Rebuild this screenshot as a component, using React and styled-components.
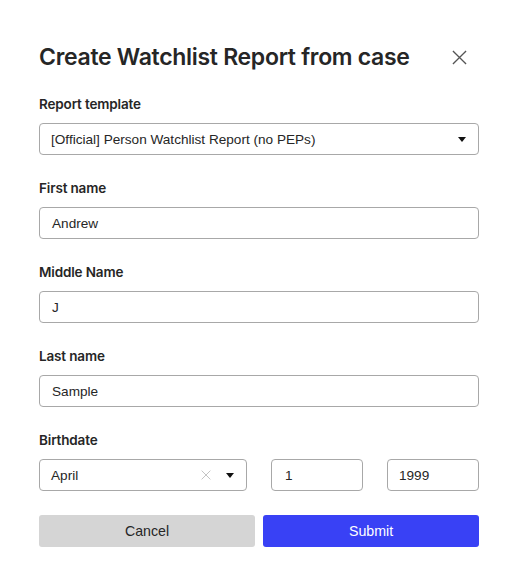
import React from "react";
import styled, { createGlobalStyle } from "styled-components";

const Global = createGlobalStyle`
  body {
    margin: 0;
    background: #ffffff;
    font-family: Inter, "Noto Sans", "Liberation Sans", sans-serif;
    color: #262626;
  }
`;

const Dialog = styled.div`
  width: 516px;
  height: 585px;
  box-sizing: border-box;
  padding: 41px 37px 0 39px;
  background: #fff;
`;

const Header = styled.div`
  display: flex;
  align-items: center;
  justify-content: space-between;
  height: 32px;
  margin-bottom: 21px;

  h2 {
    margin: 0;
    font-size: 23px;
    font-weight: 600;
    letter-spacing: -0.3px;
    color: #262626;
  }
`;

const CloseButton = styled.button`
  display: flex;
  align-items: center;
  justify-content: center;
  width: 24px;
  height: 24px;
  margin-right: 8px;
  padding: 0;
  border: none;
  background: none;
  cursor: pointer;
`;

const Form = styled.div`
  display: flex;
  flex-direction: column;
  gap: 23px;
`;

const Field = styled.div`
  display: flex;
  flex-direction: column;

  label {
    font-size: 13.5px;
    font-weight: 600;
    line-height: 20px;
    letter-spacing: -0.15px;
    margin-bottom: 9px;
    color: #262626;
  }
`;

const Box = styled.div`
  display: flex;
  align-items: center;
  height: 32px;
  box-sizing: border-box;
  width: ${(p) => p.$width || "100%"};
  padding: 0 11px 0 ${(p) => p.$pad || "11px"};
  border: 1px solid #a8a8a8;
  border-radius: 4px;
  font-family: "Liberation Sans", Arial, sans-serif;
  font-size: 13.6px;
  color: #262626;
  background: #fff;

  span.value {
    flex: 1;
  }
`;

const Caret = styled.span`
  width: 0;
  height: 0;
  margin-right: 1px;
  border-left: 4.5px solid transparent;
  border-right: 4.5px solid transparent;
  border-top: 5px solid #111;
`;

const Clear = styled.span`
  display: flex;
  margin-right: 15px;
`;

const DateRow = styled.div`
  display: flex;
  gap: 24px;
`;

const Actions = styled.div`
  display: flex;
  gap: 8px;
  margin-top: 24px;
`;

const Button = styled.button`
  flex: 1;
  height: 32px;
  border: none;
  border-radius: 3px;
  font-family: "Liberation Sans", Arial, sans-serif;
  font-size: 14.2px;
  cursor: pointer;
  background: ${(p) => (p.$primary ? "#3941f5" : "#d5d5d5")};
  color: ${(p) => (p.$primary ? "#fff" : "#262626")};
`;

const XIcon = ({ size, color, stroke }) => (
  <svg width={size} height={size} viewBox="0 0 16 16">
    <path d="M1 1 L15 15 M15 1 L1 15" stroke={color} strokeWidth={stroke} fill="none" />
  </svg>
);

const App = () => (
  <>
    <Global />
    <Dialog>
      <Header>
        <h2>Create Watchlist Report from case</h2>
        <CloseButton>
          <XIcon size={15} color="#555" stroke={1.4} />
        </CloseButton>
      </Header>
      <Form>
        <Field>
          <label>Report template</label>
          <Box>
            <span className="value">[Official] Person Watchlist Report (no PEPs)</span>
            <Caret />
          </Box>
        </Field>
        <Field>
          <label>First name</label>
          <Box $pad="12px">Andrew</Box>
        </Field>
        <Field>
          <label>Middle Name</label>
          <Box $pad="12px">J</Box>
        </Field>
        <Field>
          <label>Last name</label>
          <Box $pad="12px">Sample</Box>
        </Field>
        <Field>
          <label>Birthdate</label>
          <DateRow>
            <Box $width="208px">
              <span className="value">April</span>
              <Clear>
                <XIcon size={10} color="#c4c4c4" stroke={1.6} />
              </Clear>
              <Caret />
            </Box>
            <Box $width="92px" $pad="13px">1</Box>
            <Box $width="92px" $pad="11px">1999</Box>
          </DateRow>
        </Field>
      </Form>
      <Actions>
        <Button>Cancel</Button>
        <Button $primary>Submit</Button>
      </Actions>
    </Dialog>
  </>
);

export default App;
